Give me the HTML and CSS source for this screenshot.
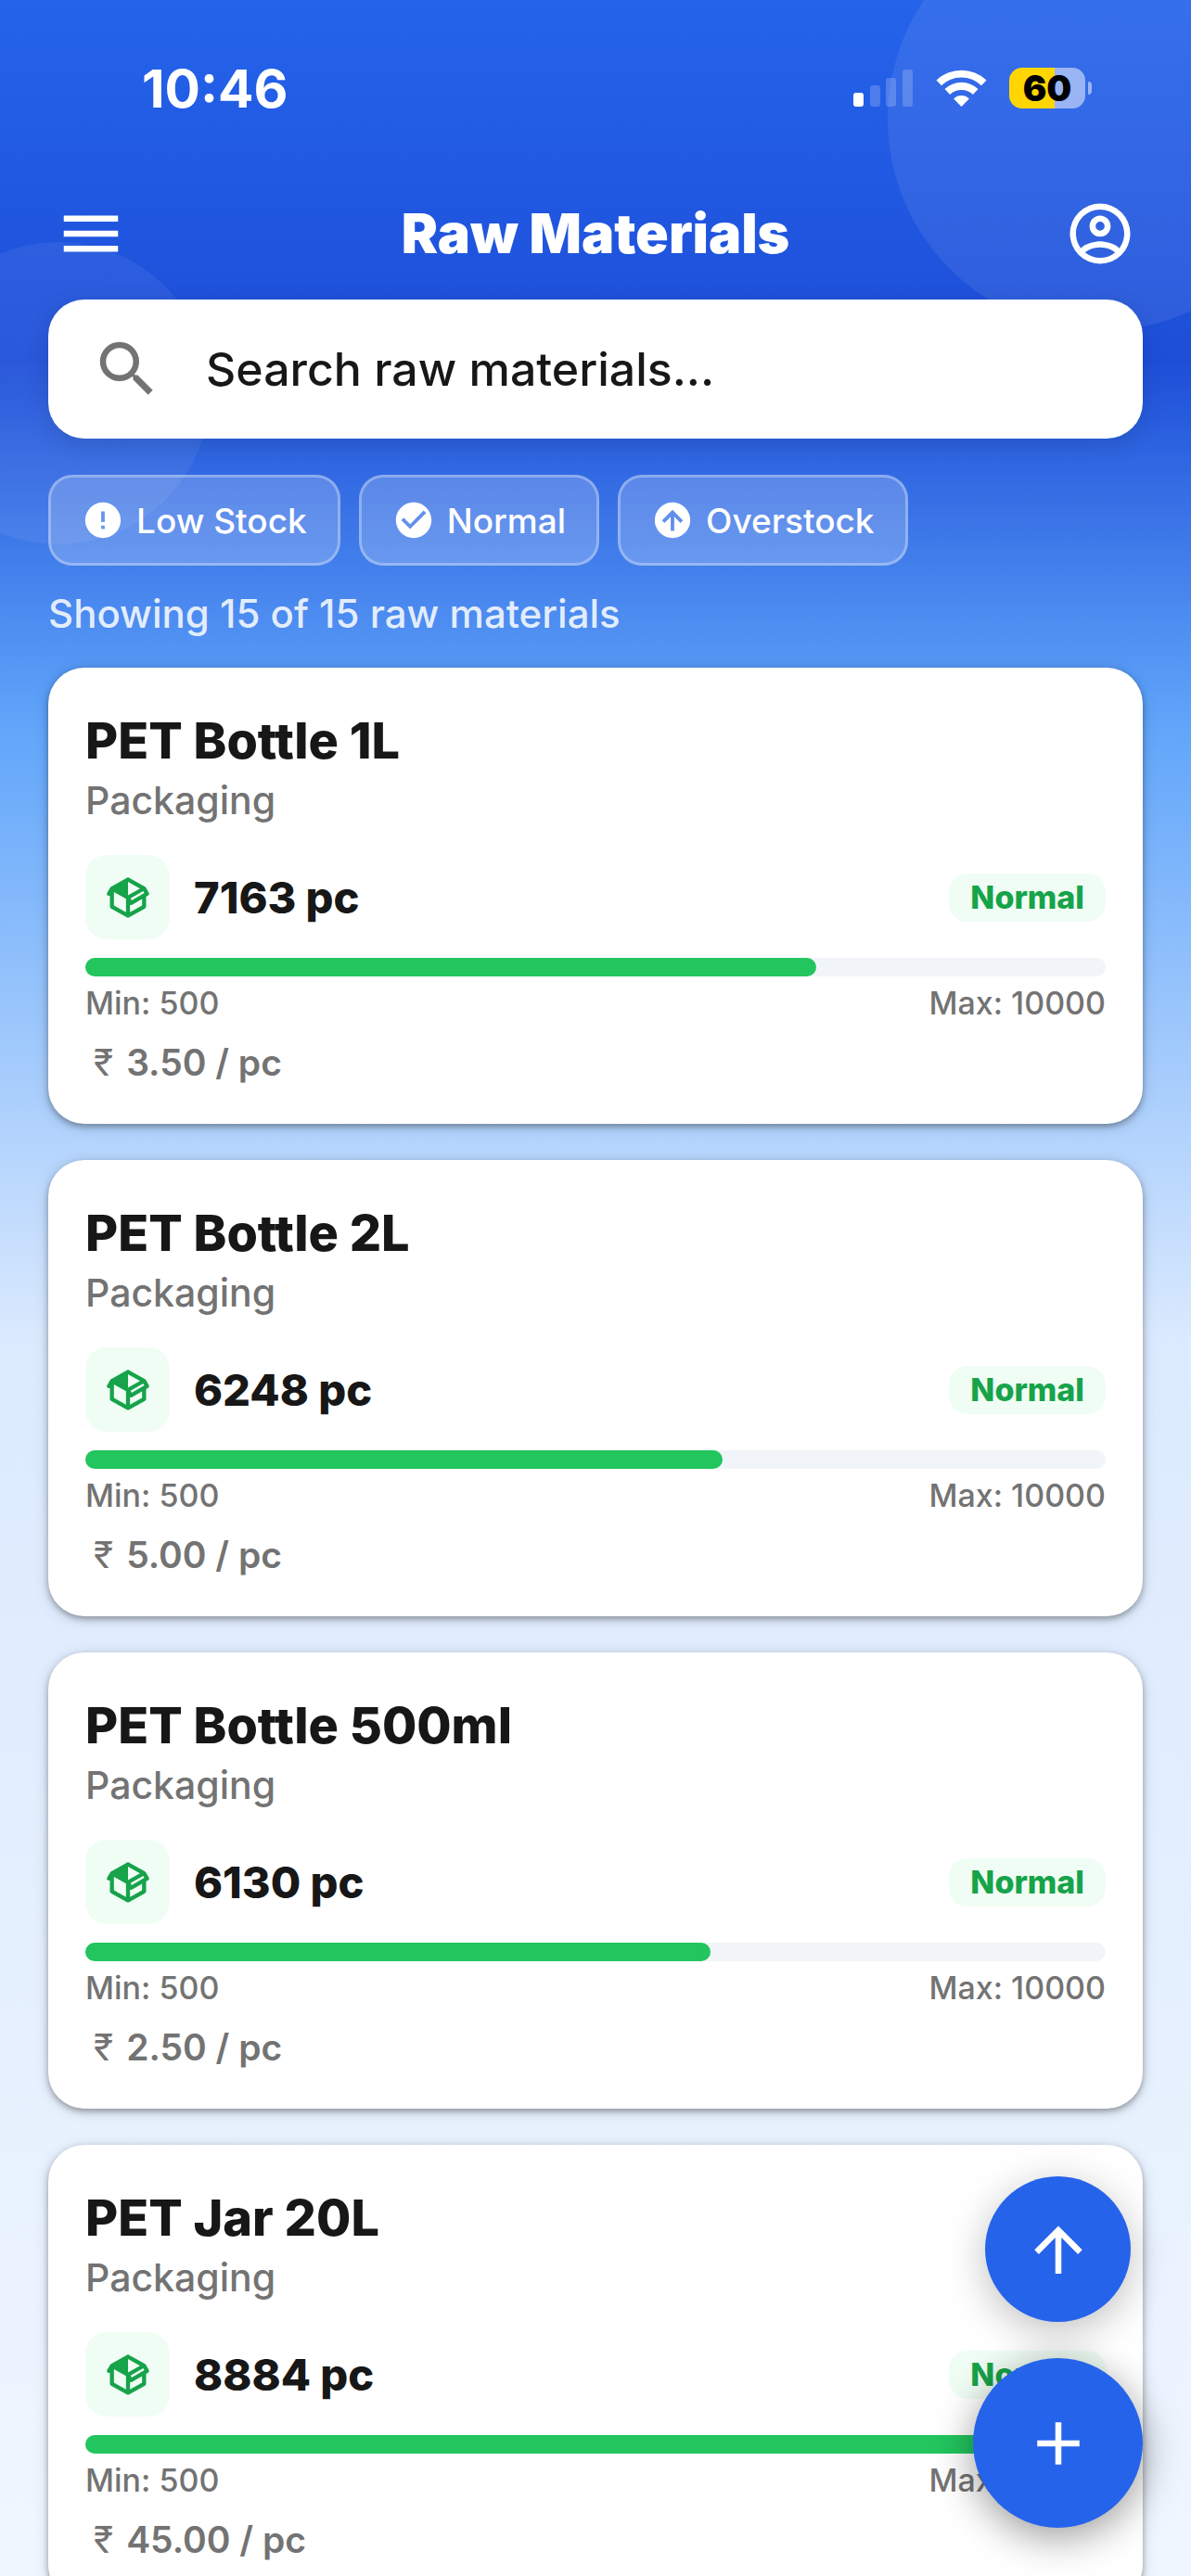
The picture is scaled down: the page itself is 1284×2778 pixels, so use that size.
FILE: index.html
```html
<!DOCTYPE html>
<html lang="en">

<head>
    <meta charset="UTF-8">
    <meta name="viewport" content="width=device-width, initial-scale=1.0">
    <title>Raw Materials</title>

    <link rel="stylesheet" href="styles.css">
</head>

<body>
    <!-- shared icons -->
    <svg class="sprite" aria-hidden="true">
        <symbol id="icon-box" viewBox="0 0 24 24">
            <path fill-rule="evenodd" d="M2 10.96C1.5 10.68 1.35 10.07 1.63 9.59L3.13 7C3.24 6.8 3.41 6.66 3.6 6.58L11.43 2.18C11.59 2.06 11.79 2 12 2C12.21 2 12.41 2.06 12.57 2.18L20.47 6.62C20.66 6.72 20.82 6.88 20.91 7.08L22.36 9.6C22.64 10.08 22.47 10.69 22 10.96L21 11.54V16.5C21 16.88 20.79 17.21 20.47 17.38L12.57 21.82C12.41 21.94 12.21 22 12 22C11.79 22 11.59 21.94 11.43 21.82L3.53 17.38C3.21 17.21 3 16.88 3 16.5V10.96C2.7 11.13 2.32 11.14 2 10.96ZM12 4.15V10.85L17.96 7.5L12 4.15ZM5 15.91L11 19.29V12.58L5 9.21V15.91ZM19 15.91V12.69L14 15.59C13.67 15.77 13.3 15.76 13 15.6V19.29L19 15.91ZM13.85 13.36L20.13 9.73L19.55 8.72L13.27 12.35L13.85 13.36Z"/>
        </symbol>
    </svg>

    <div class="page">
        <div class="circle circle-right"></div>
        <div class="circle circle-left"></div>

        <div class="status-bar">
            <span class="time">10:46</span>
            <div class="status-icons">
                <svg class="signal" viewBox="0 0 65 40">
                    <rect x="0" y="25" width="11" height="15" rx="3"/>
                    <rect class="off" x="18" y="17" width="11" height="23" rx="3"/>
                    <rect class="off" x="35" y="9" width="11" height="31" rx="3"/>
                    <rect class="off" x="53" y="0" width="11" height="40" rx="3"/>
                </svg>
                <svg class="wifi" viewBox="0 0 55 40">
                    <path d="M0.5 11.500a39 39 0 0 1 54 0l-5.500 5.700a31 31 0 0 0-43 0z"/>
                    <path d="M9.500 21a26 26 0 0 1 36 0l-5.600 5.900a18 18 0 0 0-24.800 0z"/>
                    <path d="M19.100 31.400a12 12 0 0 1 16.800 0L27.500 40z"/>
                </svg>
                <div class="battery">60</div>
            </div>
        </div>

        <header class="app-bar">
            <button class="icon-btn" aria-label="Menu">
                <svg viewBox="0 0 24 24"><path d="M3 6h18v2H3V6m0 5h18v2H3v-2m0 5h18v2H3v-2z"/></svg>
            </button>
            <h1>Raw Materials</h1>
            <button class="icon-btn" aria-label="Account">
                <svg viewBox="0 0 24 24"><path d="M12 2A10 10 0 0 0 2 12a10 10 0 0 0 10 10 10 10 0 0 0 10-10A10 10 0 0 0 12 2M7.070 18.280c.43-.9 3.050-1.780 4.930-1.780s4.510.88 4.930 1.780A7.890 7.890 0 0 1 12 20c-1.860 0-3.570-.64-4.930-1.720m11.290-1.450c-1.430-1.740-4.900-2.330-6.360-2.330s-4.930.59-6.360 2.330A7.930 7.930 0 0 1 4 12c0-4.410 3.590-8 8-8s8 3.590 8 8c0 1.820-.62 3.500-1.640 4.830M12 6c-1.940 0-3.500 1.560-3.500 3.500S10.060 13 12 13s3.500-1.560 3.500-3.500S13.940 6 12 6m0 5a1.500 1.500 0 0 1-1.500-1.500A1.500 1.500 0 0 1 12 8a1.500 1.500 0 0 1 1.500 1.500A1.500 1.500 0 0 1 12 11z"/></svg>
            </button>
        </header>

        <label class="search">
            <svg viewBox="0 0 24 24"><path d="M9.500 3A6.500 6.500 0 0 1 16 9.500c0 1.610-.59 3.090-1.560 4.230l.27.27h.79l5 5-1.500 1.500-5-5v-.79l-.27-.27A6.516 6.516 0 0 1 9.500 16 6.500 6.500 0 0 1 3 9.500 6.500 6.500 0 0 1 9.500 3m0 2C7 5 5 7 5 9.500S7 14 9.500 14 14 12 14 9.500 12 5 9.500 5z"/></svg>
            <input type="text" placeholder="Search raw materials..." aria-label="Search raw materials">
        </label>

        <div class="chips">
            <button class="chip">
                <svg viewBox="0 0 24 24"><path d="M13 13h-2V7h2m0 10h-2v-2h2M12 2A10 10 0 0 0 2 12a10 10 0 0 0 10 10 10 10 0 0 0 10-10A10 10 0 0 0 12 2z"/></svg>
                Low Stock
            </button>
            <button class="chip">
                <svg viewBox="0 0 24 24"><path d="M12 2C6.500 2 2 6.500 2 12s4.500 10 10 10 10-4.500 10-10S17.500 2 12 2m-2 15-5-5 1.410-1.410L10 14.170l7.590-7.590L19 8l-9 9z"/></svg>
                Normal
            </button>
            <button class="chip">
                <svg viewBox="0 0 24 24"><path d="M13 18V10l3.500 3.500 1.420-1.420L12 6.160l-5.920 5.920L7.500 13.500 11 10v8h2M12 2a10 10 0 0 1 10 10 10 10 0 0 1-10 10A10 10 0 0 1 2 12 10 10 0 0 1 12 2z"/></svg>
                Overstock
            </button>
        </div>

        <p class="count">Showing 15 of 15 raw materials</p>

        <main class="list">
            <article class="card">
                <h2>PET Bottle 1L</h2>
                <p class="category">Packaging</p>
                <div class="stock">
                    <div class="stock-icon"><svg><use href="#icon-box"/></svg></div>
                    <span class="qty">7163 pc</span>
                    <span class="badge">Normal</span>
                </div>
                <div class="bar"><div class="bar-fill" style="width: 71.63%"></div></div>
                <div class="range"><span>Min: 500</span><span>Max: 10000</span></div>
                <p class="price"><span class="rupee">₹</span>3.50 / pc</p>
            </article>

            <article class="card">
                <h2>PET Bottle 2L</h2>
                <p class="category">Packaging</p>
                <div class="stock">
                    <div class="stock-icon"><svg><use href="#icon-box"/></svg></div>
                    <span class="qty">6248 pc</span>
                    <span class="badge">Normal</span>
                </div>
                <div class="bar"><div class="bar-fill" style="width: 62.48%"></div></div>
                <div class="range"><span>Min: 500</span><span>Max: 10000</span></div>
                <p class="price"><span class="rupee">₹</span>5.00 / pc</p>
            </article>

            <article class="card">
                <h2>PET Bottle 500ml</h2>
                <p class="category">Packaging</p>
                <div class="stock">
                    <div class="stock-icon"><svg><use href="#icon-box"/></svg></div>
                    <span class="qty">6130 pc</span>
                    <span class="badge">Normal</span>
                </div>
                <div class="bar"><div class="bar-fill" style="width: 61.3%"></div></div>
                <div class="range"><span>Min: 500</span><span>Max: 10000</span></div>
                <p class="price"><span class="rupee">₹</span>2.50 / pc</p>
            </article>

            <article class="card">
                <h2>PET Jar 20L</h2>
                <p class="category">Packaging</p>
                <div class="stock">
                    <div class="stock-icon"><svg><use href="#icon-box"/></svg></div>
                    <span class="qty">8884 pc</span>
                    <span class="badge">Normal</span>
                </div>
                <div class="bar"><div class="bar-fill" style="width: 88.84%"></div></div>
                <div class="range"><span>Min: 500</span><span>Max: 10000</span></div>
                <p class="price"><span class="rupee">₹</span>45.00 / pc</p>
            </article>
        </main>

        <div class="fabs">
            <button class="fab fab-top" aria-label="Scroll to top">
                <svg viewBox="0 0 24 24"><path d="M13 20h-2V8l-5.500 5.500-1.420-1.420L12 4.160l7.920 7.920-1.420 1.420L13 8v12z"/></svg>
            </button>
            <button class="fab fab-add" aria-label="Add raw material">
                <svg viewBox="0 0 24 24"><path d="M19 13h-6v6h-2v-6H5v-2h6V5h2v6h6v2z"/></svg>
            </button>
        </div>
    </div>
</body>

</html>
```
FILE: styles.css
```css
* {
    box-sizing: border-box;
    padding: 0;
    margin: 0;
}

body {
    font-family: Inter, "Noto Sans", sans-serif;
    color: #171717;
}

button {
    border: none;
    background: none;
    font-family: inherit;
    color: inherit;
    cursor: pointer;
}

svg {
    display: block;
    fill: currentColor;
}

.sprite {
    position: absolute;
    width: 0;
    height: 0;
}

.page {
    position: relative;
    height: 100vh;
    overflow: hidden;
    padding: 0 52px;
    background: linear-gradient(180deg, #2563eb 0%, #1d4ed8 14%, #60a5fa 28%, #dbeafe 52%, #eff6ff 100%);
}

/* decorative circles behind the header */
.circle {
    position: absolute;
    border-radius: 50%;
}

.circle-right {
    top: -101px;
    right: -131px;
    width: 458px;
    height: 458px;
    background-color: rgba(255, 255, 255, 0.08);
}

.circle-left {
    top: 261px;
    left: -100px;
    width: 326px;
    height: 326px;
    background-color: rgba(255, 255, 255, 0.06);
}

.status-bar,
.app-bar,
.search,
.chips,
.count,
.list {
    position: relative;
}

/* status bar */
.status-bar {
    height: 190px;
    padding: 0 62px 0 101px;
    display: flex;
    justify-content: space-between;
    align-items: center;
    color: #fff;
}

.time {
    font-size: 57px;
    font-weight: 700;
}

.status-icons {
    display: flex;
    align-items: center;
    gap: 24px;
}

.signal {
    width: 65px;
    height: 40px;
}

.signal .off {
    opacity: 0.2;
}

.wifi {
    width: 55px;
    height: 40px;
}

.battery {
    position: relative;
    width: 82px;
    height: 44px;
    border-radius: 14px;
    background: linear-gradient(90deg, #ffd600 60%, rgba(255, 255, 255, 0.5) 60%);
    color: #000;
    font-size: 38px;
    font-weight: 900;
    line-height: 44px;
    text-align: center;
}

.battery::after {
    content: "";
    position: absolute;
    top: 15px;
    right: -7px;
    width: 4px;
    height: 14px;
    border-radius: 0 4px 4px 0;
    background-color: rgba(255, 255, 255, 0.5);
}

/* app bar */
.app-bar {
    height: 133px;
    padding: 0 7px 10px;
    display: flex;
    justify-content: space-between;
    align-items: center;
    color: #fff;
}

.icon-btn,
.icon-btn svg {
    width: 78px;
    height: 78px;
}

.app-bar h1 {
    font-size: 59px;
    font-weight: 900;
}

/* search */
.search {
    height: 150px;
    padding: 0 46px;
    display: flex;
    align-items: center;
    gap: 46px;
    border-radius: 39px;
    background-color: #fff;
    box-shadow: 0 6px 24px rgba(0, 0, 0, 0.12);
}

.search svg {
    flex: none;
    width: 78px;
    height: 78px;
    color: #737373;
}

.search input {
    flex: 1;
    border: none;
    outline: none;
    background: none;
    font-family: inherit;
    font-size: 50px;
    font-weight: 500;
    color: #171717;
}

.search input::placeholder {
    color: #171717;
    opacity: 1;
}

/* filter chips */
.chips {
    margin-top: 39px;
    display: flex;
    gap: 20px;
}

.chip {
    height: 98px;
    padding: 0 33px;
    display: flex;
    align-items: center;
    gap: 13px;
    border: 3px solid rgba(255, 255, 255, 0.3);
    border-radius: 26px;
    background-color: rgba(255, 255, 255, 0.2);
    color: #fff;
    font-size: 37px;
    font-weight: 500;
}

.chip svg {
    width: 46px;
    height: 46px;
}

.count {
    margin-top: 26px;
    font-size: 42px;
    font-weight: 500;
    line-height: 52px;
    color: rgba(255, 255, 255, 0.85);
}

/* cards */
.list {
    margin-top: 32px;
    display: flex;
    flex-direction: column;
    gap: 39px;
}

.card {
    padding: 46px 40px 40px;
    border-radius: 39px;
    background-color: #fff;
    box-shadow: 0 3px 6px rgba(0, 0, 0, 0.3), 0 3px 16px rgba(0, 0, 0, 0.15);
}

.card h2 {
    font-size: 54px;
    font-weight: 800;
    line-height: 66px;
}

.category {
    font-size: 41px;
    font-weight: 500;
    line-height: 62px;
    color: #737373;
}

.stock {
    margin-top: 28px;
    display: flex;
    align-items: center;
}

.stock-icon {
    width: 91px;
    height: 91px;
    display: flex;
    justify-content: center;
    align-items: center;
    border-radius: 23px;
    background-color: #f0fdf4;
    color: #16a34a;
}

.stock-icon svg {
    width: 52px;
    height: 52px;
}

.qty {
    margin-left: 26px;
    font-size: 47px;
    font-weight: 800;
}

.badge {
    margin-left: auto;
    padding: 0 23px;
    border-radius: 20px;
    background-color: #f0fdf4;
    color: #16a34a;
    font-size: 34px;
    font-weight: 800;
    line-height: 52px;
}

.bar {
    margin-top: 20px;
    height: 20px;
    border-radius: 10px;
    background-color: #f1f5f9;
}

.bar-fill {
    height: 20px;
    border-radius: 10px;
    background-color: #22c55e;
}

.range {
    margin-top: 3px;
    display: flex;
    justify-content: space-between;
    font-size: 34px;
    font-weight: 500;
    line-height: 52px;
    color: #737373;
}

.price {
    margin-top: 12px;
    padding-left: 9px;
    font-size: 39px;
    font-weight: 600;
    line-height: 52px;
    color: #737373;
}

.rupee {
    margin-right: 14px;
    font-weight: 400;
}

/* floating buttons */
.fabs {
    position: fixed;
    right: 52px;
    bottom: 52px;
    display: flex;
    flex-direction: column;
    align-items: center;
    gap: 39px;
}

.fab {
    display: flex;
    justify-content: center;
    align-items: center;
    border-radius: 50%;
    background-color: #2563eb;
    color: #fff;
}

.fab-top {
    width: 157px;
    height: 157px;
    box-shadow: 0 10px 44px rgba(0, 0, 0, 0.25);
}

.fab-add {
    width: 183px;
    height: 183px;
    box-shadow: 0 10px 44px rgba(0, 0, 0, 0.4);
}

.fab svg {
    width: 78px;
    height: 78px;
}
```
